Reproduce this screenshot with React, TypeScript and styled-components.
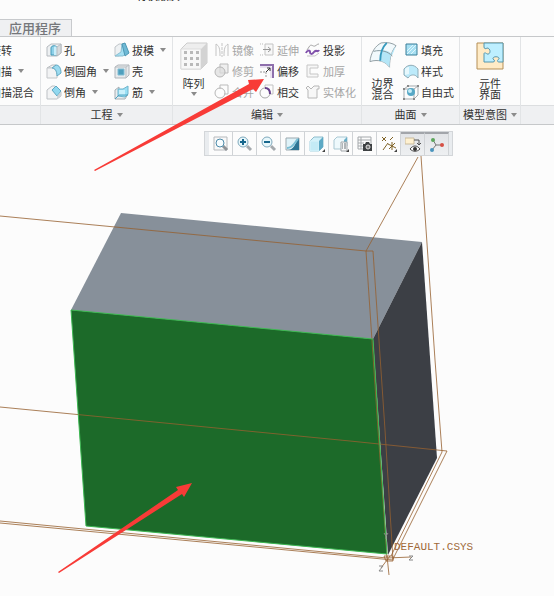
import React from "react";
import styled, { createGlobalStyle } from "styled-components";

const Global = createGlobalStyle`
  * { box-sizing: border-box; }
  body { margin: 0; background: #fcfcfc; }
  button { font: inherit; color: inherit; background: none; border: 0; padding: 0; margin: 0; }
`;

const Page = styled.main`
  position: relative;
  min-height: 100vh;
  overflow: hidden;
  background: #fcfcfc;
  color: #333;
  font: 11px/14px "Noto Sans CJK SC", sans-serif;
`;
const TitleBar = styled.header`
  display: flex;
  flex-direction: column;
  justify-content: flex-end;
  height: 19px;
`;
const Title = styled.div`
  height: 3px;
  margin: 0 0 16px 136px;
  overflow: hidden;
  display: flex;
  align-items: flex-end;
  color: #111;
  font-size: 11px;
  line-height: 16px;
`;
const Tabs = styled.nav`
  display: flex;
  height: 17px;
`;
const Tab = styled.button`
  && {
    padding: 0 10px 1px 9px;
    background: #eff0f2;
    border: 1px solid #c8cacd;
    border-width: 1px 1px 0 0;
    color: #74767a;
    font-size: 13px;
    font-weight: 500;
    line-height: 15px;
  }
`;
const Ribbon = styled.section`
  display: grid;
  grid-template-columns: 41px 132px 189px 98px 61px 1fr;
  border-top: 1px solid #c6c8ca;
  border-bottom: 1px solid #c6c8ca;
`;
const Group = styled.div`
  display: flex;
  flex-direction: column;
  min-width: 0;
  overflow: hidden;
  border-right: 1px solid #e2e4e6;
  &:last-child { border-right: 0; }
`;
const GroupBody = styled.div<{ $end?: boolean; $center?: boolean; $left?: number }>`
  display: flex;
  justify-content: ${(p) => (p.$end ? "flex-end" : p.$center ? "center" : "flex-start")};
  height: 68px;
  padding: 2px ${(p) => (p.$end ? 6 : 0)}px 3px ${(p) => p.$left ?? 0}px;
`;
const GroupLabel = styled.button`
  && {
    display: flex;
    align-items: center;
    justify-content: center;
    gap: 4px;
    height: 19px;
    padding-bottom: 2px;
    border-top: 1px solid #dcdee0;
    background: #eff0f2;
    white-space: nowrap;
  }
`;
const Column = styled.div<{ $width?: number }>`
  flex: none;
  width: ${(p) => (p.$width ? p.$width + "px" : "auto")};
`;
const Command = styled.button`
  && {
    display: flex;
    align-items: center;
    gap: 2px;
    height: 21px;
    white-space: nowrap;
  }
  &:disabled { color: #a5a5a5; }
`;
const BigCommand = styled.button<{ $width: number }>`
  && {
    display: flex;
    flex-direction: column;
    align-items: center;
    flex: none;
    width: ${(p) => p.$width}px;
    padding-top: 3px;
  }
`;
const BigLabel = styled.span`
  width: 22px;
  margin: 8px 0 2px;
  line-height: 11px;
`;
const Caret = styled.i<{ $gap?: number }>`
  border: 3px solid transparent;
  border-top: 4px solid #8b8b8b;
  border-bottom: 0;
  margin-left: ${(p) => p.$gap ?? 0}px;
  margin-top: 1px;
`;
const Viewport = styled.section`
  position: relative;
  padding-top: 6px;
`;
const Scene = styled.svg`
  position: absolute;
  left: 0;
  top: 0;
  overflow: visible;
  pointer-events: none;
`;
const Toolbar = styled.div`
  position: relative;
  display: flex;
  width: max-content;
  height: 25px;
  margin-left: 204px;
  padding: 0 4px 0 5px;
  border: 1px solid #d3d6d9;
  border-width: 1px 0;
  background: #e9ecef;
  box-shadow: inset 1px 0 #d3d6d9, inset -1px 0 #d3d6d9;
`;
const Tool = styled.button<{ $pressed?: boolean }>`
  && {
    display: grid;
    place-items: center;
    width: 24px;
    height: 23px;
    background: ${(p) => (p.$pressed ? "linear-gradient(#e2e4e7, #eef0f2)" : "#fcfcfc")};
    border-style: solid;
    border-color: ${(p) => (p.$pressed ? "#a2a5aa" : "#d0d3d6")} #d0d3d6 #d0d3d6;
    border-width: ${(p) => (p.$pressed ? "2px 1px 0 0" : "0 1px 0 0")};
  }
`;

const Svg = ({ s = 16, box = s, children }: { s?: number; box?: number; children: React.ReactNode }) => (
  <svg width={s} height={s} viewBox={`0 0 ${box} ${box}`} fill="none" aria-hidden="true">{children}</svg>
);

const icons: Record<string, React.ReactNode> = {
  hole: <Svg><path d="M1 5l4-3h10v9l-4 3H1z" fill="#edf0f2" stroke="#b5babf" /><path d="M5 13V6c0-3 6-3 6 0v7z" fill="#8ed0e8" stroke="#4299b8" /><path d="M8 13V5c1-1 3 0 3 1v7z" fill="#c9eefa" /><path d="M11 5l4-3v9l-4 3z" fill="#d5dadd" stroke="#b5babf" /></Svg>,
  round: <Svg><path d="M1 5l5-3h4L6 5z" fill="#f3f3f3" stroke="#b9bdc1" /><path d="M1 5h5c3 0 5 3 5 8v2H1z" fill="#f2f3f4" stroke="#c3c6c9" /><path d="M6 5l4-3c3 0 5 3 5 8l-4 3c0-5-2-8-5-8z" fill="#9bdbf0" stroke="#61a9c3" /></Svg>,
  chamfer: <Svg><path d="M1 6l5-4h3l6 6v4l-4 3H1z" fill="#f2f3f4" stroke="#bdc1c5" /><path d="M6 6l4-4 5 5-4 5z" fill="#91d8ef" stroke="#61a9c3" /><path d="M11 12v3l4-3V8z" fill="#cdd3d7" /></Svg>,
  draft: <Svg><path d="M1 5l4-3h4v9l-4 3H1z" fill="#eef1f3" stroke="#c0c5c9" /><path d="M8 2l5 9-4 3H1l6-4z" fill="#a4dff2" stroke="#8bbfd2" /><path d="M8 2l3-1 4 10-4 3z" fill="#6fb9d5" stroke="#4d98b4" /></Svg>,
  shell: <Svg><path d="M1 4l3-2h11v10l-3 3H1z" fill="#e7eaec" stroke="#b0b5ba" /><path d="M1 4h11v11M12 4l3-2" stroke="#b9bec2" /><path d="M4 6h6v6H4z" fill="#4f9fbd" stroke="#81bed5" /></Svg>,
  rib: <Svg><path d="M1 15V6l4-3v7h9l-3 5z" fill="#e9edef" stroke="#a7adb2" /><path d="M4 12V5h5l5-3v8l-3 3z" fill="#9adff4" stroke="#6fb4cc" /><path d="M5 6h6v5H5z" fill="#caf0fb" /><path d="M1 15l4-4h9" stroke="#4fa3c0" /></Svg>,
  mirror: <Svg><path d="M2 2v12M2 2c3 2 4 4 4 12M14 2v12M14 2c-3 2-4 4-4 12" stroke="#c4c4c4" /><path d="M8 1v14" stroke="#c4c4c4" strokeDasharray="3 1" /></Svg>,
  trim: <Svg><path d="M6 1h8v9H6z" fill="#efefef" stroke="#bbb" /><circle cx="6" cy="9" r="5" fill="#ddd" fillOpacity=".7" stroke="#b6b6b6" /></Svg>,
  merge: <Svg><path d="M6 5V1h8v9h-4" stroke="#bbb" /><circle cx="6" cy="9" r="5" stroke="#b6b6b6" /></Svg>,
  extend: <Svg><path d="M1 2h4M1 13h4" stroke="#bbb" strokeDasharray="1 1" /><path d="M6 2h8v11H6z" fill="#f7f7f7" stroke="#c4c4c4" /><path d="M4 7.500h7M9 5l3 2.500L9 10" stroke="#999" /></Svg>,
  offset: <Svg><path d="M1 2h13v13" stroke="#8e6fac" strokeWidth="2" /><path d="M1 4h11v11" stroke="#d6c7e4" /><path d="M1 9h6v6" stroke="#999" strokeDasharray="2 1" /><path d="M7 9l4-4M8 5h3v3" stroke="#333" /></Svg>,
  intersect: <Svg><path d="M6 4V1h8v9h-3" stroke="#c2c2c2" /><circle cx="6" cy="9" r="5" stroke="#a8a8a8" /><path d="M6 4c3 0 5 2 5 6" stroke="#67408d" strokeWidth="2" /></Svg>,
  project: <Svg><path d="M4 5c2-4 4 0 6-1s2-2 4-2M4 5l-2 3" stroke="#a5a5a5" /><path d="M1 11c1-3 4-3 4-1s2 3 4 0 4 1 5-2" stroke="#8051ab" strokeWidth="2" /><path d="M2 14h8l4-3" stroke="#c4c4c4" /></Svg>,
  thicken: <Svg><path d="M13 2H2v12h11v-3H5V5h8z" fill="#f7f7f7" stroke="#c6c6c6" /></Svg>,
  solidify: <Svg><path d="M3 14V6L1 4l2-2 3 3 3-3h5v3h-2v9z" fill="#f7f7f7" stroke="#b7b7b7" /></Svg>,
  fill: <Svg><path d="M3 2h11v11H3z" fill="#a6dff2" stroke="#3b7f99" /><path d="M4 9l6-6M4 12l9-9M8 12l5-5" stroke="#dff6fc" /></Svg>,
  style: <Svg><path d="M1 6c4-5 10-5 14 0v9c-2-3-4-3-5-3s-3 0-5 3l-4-3z" fill="#bceafa" stroke="#8fabb6" /><path d="M2 6c2-2 3-2 4-2v7l-4 1z" fill="#e7f8fd" /></Svg>,
  free: <Svg><path d="M1 5l4-3h10v9l-4 4H1zM1 5h10v10M11 5l4-3" stroke="#a5abaf" /><circle cx="8" cy="8" r="4" fill="#57a8c6" /><circle cx="7" cy="7" r="2" fill="#c7edf8" /><path d="M0 4h2v2H0zM4 1h2v2H4zM14 1h2v2h-2zM0 14h2v2H0zM10 14h2v2h-2z" fill="#888" /></Svg>,
  zoomFit: <Svg><path d="M1 1h13v13H1z" fill="#f8f8f8" stroke="#b7babd" /><path d="M10 10l4 4" stroke="#8f9498" strokeWidth="3" /><circle cx="7" cy="7" r="4" fill="#f7fdff" stroke="#4d8baa" strokeWidth="1" /></Svg>,
  zoomIn: <Svg><path d="M10 10l4 4" stroke="#a4a9ad" strokeWidth="3" /><circle cx="6" cy="6" r="5" fill="#e8f7fb" stroke="#7fa9bc" /><path d="M3 6h6M6 3v6" stroke="#17678d" strokeWidth="2" /></Svg>,
  zoomOut: <Svg><path d="M10 10l4 4" stroke="#a4a9ad" strokeWidth="3" /><circle cx="6" cy="6" r="5" fill="#e8f7fb" stroke="#7fa9bc" /><path d="M3 6h6" stroke="#17678d" strokeWidth="2" /></Svg>,
  repaint: <Svg><path d="M1 2h13v12H1z" fill="#dff2f8" stroke="#9ca9af" /><path d="M14 2v12H3c6 0 7-7 11-12z" fill="#2d7594" /><path d="M2 12c6 0 7-5 11-9" stroke="#79bed4" strokeWidth="2" /></Svg>,
  shade: <Svg><path d="M1 5l4-4h9v10l-4 4H1z" fill="#d2f1fa" stroke="#8fbdcc" /><path d="M1 5h9v10H1z" fill="#c4ebf6" stroke="#d9f3fa" /><path d="M10 5l4-4v10l-4 4z" fill="#5da9c5" /><path d="M16 13v3h-3z" fill="#444" /></Svg>,
  views: <Svg><path d="M1 4l3-3h10v9l-3 3H1z" fill="#eef9fc" stroke="#a9c8d3" /><path d="M11 4l3-3v5h-3z" fill="#6aafc8" /><path d="M8 6h6v9H8z" fill="#f8f8f8" stroke="#a0a5a9" /><path d="M9 8h1M9 10h1M9 12h1M11 8h2M11 10h2M11 12h2" stroke="#687278" /><path d="M16 13v3h-3z" fill="#444" /></Svg>,
  camera: <Svg><path d="M1 1h13v12H1zM1 4h13M4 1v12M1 7h6M1 10h5" stroke="#a5a9ac" /><path d="M6 8h2l1-2h3l1 2h2v7H6z" fill="#3d4042" /><circle cx="11" cy="11" r="2" fill="#777" stroke="#e4e4e4" /></Svg>,
  datum: <Svg><path d="M1 1l4 4M5 1L1 5M12 1L9 4M7 7l-5 7" stroke="#806327" /><path d="M11 6v8M7 8l8 4M14 7l-6 6" stroke="#806327" strokeWidth="1" /><path d="M16 13v3h-3z" fill="#444" /></Svg>,
  notes: <Svg><path d="M0 1h9v6H0z" fill="#fff1d0" stroke="#c8ba9c" /><path d="M9 3h5v5M12 6l2 2 2-2" stroke="#555" /><path d="M5 12c3-4 7-4 10 0-3 3-7 3-10 0z" fill="#fff" stroke="#444" /><circle cx="10" cy="12" r="2" fill="#333" /></Svg>,
  spin: <Svg><path d="M4 3l3 5-4 5M7 8h6" stroke="#777" strokeWidth="1" /><circle cx="4" cy="3" r="2" fill="#5ca65b" /><circle cx="3" cy="13" r="2" fill="#4a94bd" /><circle cx="13" cy="8" r="2" fill="#d65045" /></Svg>,
};

const Pattern = () => (
  <Svg s={28}>
    <path d="M1 7l6-6h20v20l-6 6H1z" fill="#eee" stroke="#ccc" />
    <path d="M1 7h20v20H1z" fill="#f8f8f8" stroke="#ddd" />
    <path d="M21 7l6-6v20l-6 6z" fill="#d3d3d3" />
    {[9, 15, 21].map((y) => [4, 10, 16].map((x) => <rect key={`${x}-${y}`} x={x} y={y} width="3" height="3" fill="#b9b9b9" />))}
  </Svg>
);
const Boundary = () => (
  <Svg s={28} box={30}>
    <path d="M1 21C2 11 7 4 13 1c7-1 12 0 16 3-5 6-7 13-7 23-4-6-12-9-21-6z" fill="#f1f9fc" stroke="#8d9a9f" />
    <path d="M29 4c-5 6-7 13-7 23-3-4-6-6-10-7 0-5 1-8 3-11 5 0 7 1 10 5z" fill="#b4e6f7" />
    <path d="M5 10c8-2 15 0 20 5" stroke="#7f9299" />
    <path d="M19 1c-5 5-7 12-7 19" stroke="#3599bd" strokeWidth="2" />
  </Svg>
);
const Puzzle = () => (
  <Svg s={28}>
    <path d="M1 1h26v26H1z" fill="#ffebc6" stroke="#b58f56" />
    <path d="M8 1h19v19h-4c-2 0-2-2 0-3 1-3-7-3-6 0 2 1 2 3 0 3H8v-8c0-2 2-1 3 0 4 1 4-6 0-6-1 1-3 1-3-1z" fill="#bdefff" stroke="#5796ad" />
  </Svg>
);

type Cmd = { icon?: string; label: string; menu?: boolean; off?: boolean };
const Commands = ({ items, width }: { items: Cmd[]; width?: number }) => (
  <Column $width={width}>
    {items.map((c) => (
      <Command key={c.label} type="button" disabled={c.off}>
        {c.icon && icons[c.icon]}
        <span>{c.label}</span>
        {c.menu && <Caret $gap={4} />}
      </Command>
    ))}
  </Column>
);
const Label = ({ children }: { children?: React.ReactNode }) => (
  <GroupLabel type="button">{children}<Caret /></GroupLabel>
);

const tools = [
  ["zoomFit", "重新调整"], ["zoomIn", "放大"], ["zoomOut", "缩小"], ["repaint", "重画"], ["shade", "显示样式"],
  ["views", "已保存方向"], ["camera", "视图管理器"], ["datum", "基准显示"], ["notes", "注释显示"], ["spin", "旋转中心"],
];

const Model = () => (
  <Scene width="100%" height="471" aria-label="实体模型">
    <g transform="translate(0 -125)">
      <path d="M121 213L422 242L373 339L71 310z" fill="#87909a" />
      <path d="M422 242L437 458L388 555L373 339z" fill="#3c3f45" />
      <path d="M71 310L373 339L387 554L86 526z" fill="#1c6a29" />
      <g fill="none" stroke="#96602f" strokeOpacity=".8" strokeWidth="1">
        <path d="M0 216L366 251H373L385 430L393 560L0 523" />
        <path d="M418 157L366 251L378 430L387 558L0 521" />
        <path d="M421 156L435 360L442 452L391 556" />
        <path d="M0 407L350 441L447 451L393 559" />
        <path d="M387 558L411 557M387 556L389 575M390 556L381 568M384 556h9v5h-7z" />
      </g>
      <path d="M71 310L373 339L387 554L86 526z" fill="none" stroke="#3db752" />
      <path d="M384 533l2 3 2-3M386 536v3M409 556h4l-4 4h4M379 566h4l-4 5h4" fill="none" stroke="#888" />
      <text x="394" y="550" fill="#a06a3a" fontFamily="Liberation Mono, monospace" fontSize="11">DEFAULT.CSYS</text>
    </g>
  </Scene>
);

export default function App() {
  return (
    <Page>
      <Global />
      <TitleBar><Title>有模版质</Title></TitleBar>
      <Tabs><Tab type="button">应用程序</Tab></Tabs>
      <Ribbon>
        <Group>
          <GroupBody $end>
            <Commands items={[{ label: "旋转" }, { label: "扫描", menu: true }, { label: "扫描混合" }]} />
          </GroupBody>
          <GroupLabel type="button" aria-label="形状" />
        </Group>
        <Group>
          <GroupBody $left={5}>
            <Commands width={68} items={[{ icon: "hole", label: "孔" }, { icon: "round", label: "倒圆角", menu: true }, { icon: "chamfer", label: "倒角", menu: true }]} />
            <Commands items={[{ icon: "draft", label: "拔模", menu: true }, { icon: "shell", label: "壳" }, { icon: "rib", label: "筋", menu: true }]} />
          </GroupBody>
          <Label>工程</Label>
        </Group>
        <Group>
          <GroupBody>
            <BigCommand type="button" $width={41}><Pattern /><BigLabel>阵列</BigLabel><Caret /></BigCommand>
            <Commands width={45} items={[{ icon: "mirror", label: "镜像", off: true }, { icon: "trim", label: "修剪", off: true }, { icon: "merge", label: "合并", off: true }]} />
            <Commands width={46} items={[{ icon: "extend", label: "延伸", off: true }, { icon: "offset", label: "偏移" }, { icon: "intersect", label: "相交" }]} />
            <Commands items={[{ icon: "project", label: "投影" }, { icon: "thicken", label: "加厚", off: true }, { icon: "solidify", label: "实体化", off: true }]} />
          </GroupBody>
          <Label>编辑</Label>
        </Group>
        <Group>
          <GroupBody>
            <BigCommand type="button" $width={41}><Boundary /><BigLabel>边界混合</BigLabel></BigCommand>
            <Commands items={[{ icon: "fill", label: "填充" }, { icon: "style", label: "样式" }, { icon: "free", label: "自由式" }]} />
          </GroupBody>
          <Label>曲面</Label>
        </Group>
        <Group>
          <GroupBody $center>
            <BigCommand type="button" $width={41}><Puzzle /><BigLabel>元件界面</BigLabel></BigCommand>
          </GroupBody>
          <Label>模型意图</Label>
        </Group>
        <Group>
          <GroupBody />
          <GroupLabel as="div" />
        </Group>
      </Ribbon>
      <Viewport>
        <Model />
        <Toolbar role="toolbar">
          {tools.map(([icon, name], i) => (
            <Tool key={icon} type="button" aria-label={name} $pressed={i > 7}>{icons[icon]}</Tool>
          ))}
        </Toolbar>
      </Viewport>
      <Scene width="100%" height="100%" aria-hidden="true">
        <g fill="#f83b37">
          <path d="M94 170L249 84L248 80L264 79L256 92L253 89L95 171z" />
          <path d="M58 572L178 490L176 487L192 483L184 497L182 494L59 573z" />
        </g>
      </Scene>
    </Page>
  );
}
